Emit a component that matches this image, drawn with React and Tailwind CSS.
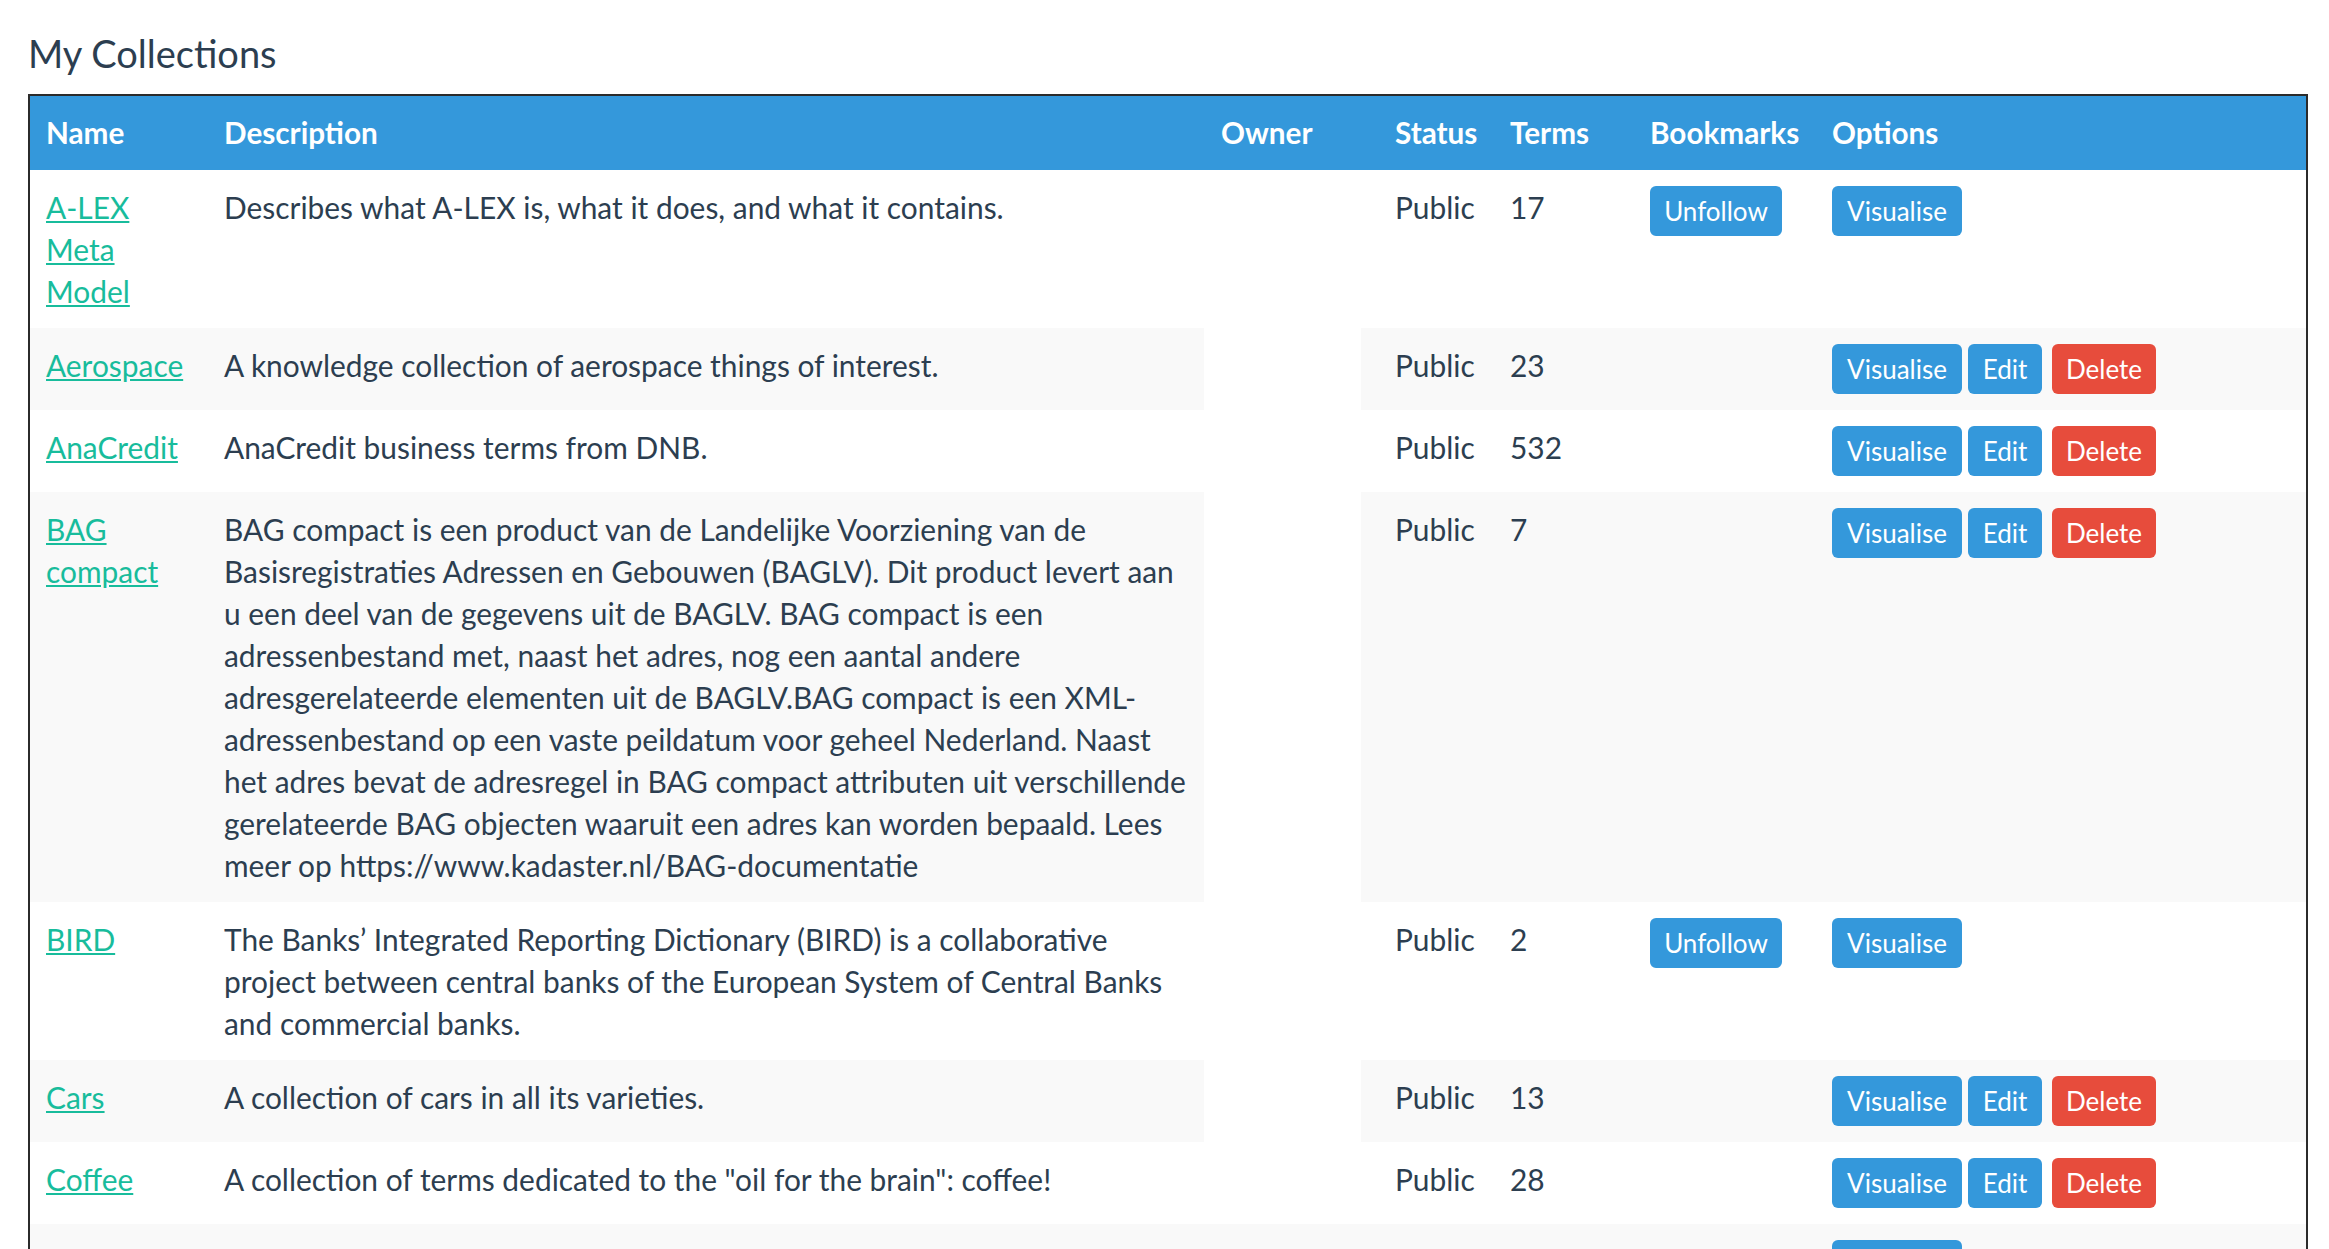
import React from "react";

const rows = [
  {
    name: ["A-LEX", "Meta", "Model"],
    desc: ["Describes what A-LEX is, what it does, and what it contains."],
    terms: "17",
    follow: true,
    edit: false,
    striped: false,
    ownerGap: false,
  },
  {
    name: ["Aerospace"],
    desc: ["A knowledge collection of aerospace things of interest."],
    terms: "23",
    follow: false,
    edit: true,
    striped: true,
    ownerGap: true,
  },
  {
    name: ["AnaCredit"],
    desc: ["AnaCredit business terms from DNB."],
    terms: "532",
    follow: false,
    edit: true,
    striped: false,
    ownerGap: false,
  },
  {
    name: ["BAG", "compact"],
    desc: [
      "BAG compact is een product van de Landelijke Voorziening van de",
      "Basisregistraties Adressen en Gebouwen (BAGLV). Dit product levert aan",
      "u een deel van de gegevens uit de BAGLV. BAG compact is een",
      "adressenbestand met, naast het adres, nog een aantal andere",
      "adresgerelateerde elementen uit de BAGLV.BAG compact is een XML-",
      "adressenbestand op een vaste peildatum voor geheel Nederland. Naast",
      "het adres bevat de adresregel in BAG compact attributen uit verschillende",
      "gerelateerde BAG objecten waaruit een adres kan worden bepaald. Lees",
      "meer op https://www.kadaster.nl/BAG-documentatie",
    ],
    terms: "7",
    follow: false,
    edit: true,
    striped: true,
    ownerGap: true,
  },
  {
    name: ["BIRD"],
    desc: [
      "The Banks\u2019 Integrated Reporting Dictionary (BIRD) is a collaborative",
      "project between central banks of the European System of Central Banks",
      "and commercial banks.",
    ],
    terms: "2",
    follow: true,
    edit: false,
    striped: false,
    ownerGap: false,
  },
  {
    name: ["Cars"],
    desc: ["A collection of cars in all its varieties."],
    terms: "13",
    follow: false,
    edit: true,
    striped: true,
    ownerGap: true,
  },
  {
    name: ["Coffee"],
    desc: ['A collection of terms dedicated to the "oil for the brain": coffee!'],
    terms: "28",
    follow: false,
    edit: true,
    striped: false,
    ownerGap: false,
  },
];

function Btn({ children, className }) {
  return (
    <span
      className={
        "inline-flex h-[50px] items-center justify-center rounded-[6px] text-[26px] leading-none text-white " +
        className
      }
    >
      {children}
    </span>
  );
}

export default function App() {
  return (
    <div className="min-h-screen bg-white pl-[28px] pt-[33px] font-[family-name:Lato,sans-serif] text-[#2c3e50]">
      <h4 className="mb-[20px] text-[38px] font-normal leading-[41px]">My Collections</h4>
      <table className="w-[2280px] table-fixed border-separate border-spacing-0 border-2 border-[#2b2b2b] text-[29.9px] leading-[42px]">
        <colgroup>
          <col className="w-[178px]" />
          <col className="w-[996px]" />
          <col className="w-[157px]" />
          <col className="w-[133px]" />
          <col className="w-[140px]" />
          <col className="w-[182px]" />
          <col className="w-[490px]" />
        </colgroup>
        <thead>
          <tr className="bg-[#3498db] text-[29.7px] text-white">
            <th className="p-4 text-left align-top font-bold">Name</th>
            <th className="p-4 text-left align-top font-bold">Description</th>
            <th className="py-4 pl-[17px] pr-2 text-left align-top font-bold">Owner</th>
            <th className="py-4 pl-[34px] pr-1 text-left align-top font-bold">Status</th>
            <th className="p-4 text-left align-top font-bold">Terms</th>
            <th className="py-4 pl-[16px] pr-1 text-left align-top font-bold">Bookmarks</th>
            <th className="p-4 text-left align-top font-bold">Options</th>
          </tr>
        </thead>
        <tbody>
          {rows.map((r, i) => {
            const bg = r.striped ? "bg-[#f9f9f9]" : "bg-white";
            const ownerBg = r.striped && !r.ownerGap ? "bg-[#f9f9f9]" : "bg-white";
            return (
              <tr key={i}>
                <td className={"p-4 align-top " + bg}>
                  <a href="#" className="text-[#18bc9c] underline decoration-[#18bc9c]">
                    {r.name.map((n, j) => (
                      <React.Fragment key={j}>
                        {j > 0 && <br />}
                        {n}
                      </React.Fragment>
                    ))}
                  </a>
                </td>
                <td className={"p-4 align-top " + bg}>
                  {r.desc.map((d, j) => (
                    <span key={j} className="block whitespace-nowrap">
                      {d}
                    </span>
                  ))}
                </td>
                <td className={"p-4 align-top " + ownerBg}></td>
                <td className={"py-4 pl-[34px] pr-1 align-top " + bg}>Public</td>
                <td className={"p-4 align-top " + bg}>{r.terms}</td>
                <td className={"py-4 pl-4 pr-1 align-top " + bg}>
                  {r.follow && <Btn className="w-[132px] bg-[#3498db]">Unfollow</Btn>}
                </td>
                <td className={"p-4 align-top " + bg}>
                  <div className="flex h-[50px] items-start">
                    <Btn className="w-[130px] bg-[#3498db]">Visualise</Btn>
                    {r.edit && <Btn className="ml-[6px] w-[74px] bg-[#3498db]">Edit</Btn>}
                    {r.edit && <Btn className="ml-[10px] w-[104px] bg-[#e74c3c]">Delete</Btn>}
                  </div>
                </td>
              </tr>
            );
          })}
          <tr>
            <td className="bg-[#f9f9f9] p-4 align-top"></td>
            <td className="bg-[#f9f9f9] p-4 align-top"></td>
            <td className="bg-[#f9f9f9] p-4 align-top"></td>
            <td className="bg-[#f9f9f9] p-4 align-top"></td>
            <td className="bg-[#f9f9f9] p-4 align-top"></td>
            <td className="bg-[#f9f9f9] p-4 align-top"></td>
            <td className="bg-[#f9f9f9] p-4 align-top">
              <div className="flex h-[50px] items-start">
                <Btn className="w-[130px] bg-[#3498db]">Visualise</Btn>
              </div>
            </td>
          </tr>
        </tbody>
      </table>
    </div>
  );
}
